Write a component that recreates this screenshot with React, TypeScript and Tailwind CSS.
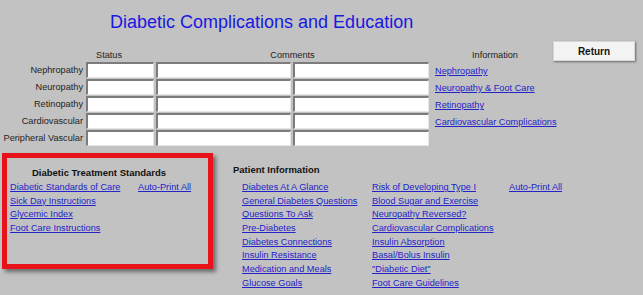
import React from "react";

const font = { fontFamily: '"Liberation Sans", Arial, sans-serif' };

const rows = ["Nephropathy", "Neuropathy", "Retinopathy", "Cardiovascular", "Peripheral Vascular"];
const info = ["Nephropathy", "Neuropathy & Foot Care", "Retinopathy", "Cardiovascular Complications", ""];

const col1 = [
  "Diabetes At A Glance",
  "General Diabetes Questions",
  "Questions To Ask",
  "Pre-Diabetes",
  "Diabetes Connections",
  "Insulin Resistance",
  "Medication and Meals",
  "Glucose Goals",
];
const col2 = [
  "Risk of Developing Type I",
  "Blood Sugar and Exercise",
  "Neuropathy Reversed?",
  "Cardiovascular Complications",
  "Insulin Absorption",
  "Basal/Bolus Insulin",
  "\"Diabetic Diet\"",
  "Foot Care Guidelines",
];

function Field() {
  return (
    <div className="h-[16px] bg-white border-t-2 border-l-2 border-b border-r border-t-[#7c7c7c] border-l-[#7c7c7c] border-b-[#e6e6e6] border-r-[#e6e6e6]" />
  );
}

function Link({ children }: { children: React.ReactNode }) {
  return <a className="text-[#2323c8] underline whitespace-nowrap cursor-pointer">{children}</a>;
}

export default function App() {
  return (
    <div style={font} className="w-[643px] h-[295px] bg-[#c2c2c2] overflow-hidden text-[9.2px] text-[#222]">
      <div className="h-[41px] pt-[12px] pl-[110px]">
        <div className="text-[18px] leading-[20px] text-[#1818e0]">Diabetic Complications and Education</div>
      </div>
      <div className="grid grid-cols-[84px_68px_135px_136px_120px_82px] gap-x-[2px] gap-y-[1px] grid-rows-[20px_repeat(5,16px)]">
        <div />
        <div className="self-end leading-[12px] pl-[10px]">Status</div>
        <div className="col-span-2 self-end leading-[12px] text-center">Comments</div>
        <div className="self-end leading-[12px] pl-[41px]">Information</div>
        <button className="h-[20px] bg-[#f3f3f3] border border-[#d8d8d8] shadow-[1px_1px_2px_rgba(0,0,0,0.45)] text-[10px] font-bold text-[#111]">
          Return
        </button>
        {rows.map((r, i) => (
          <React.Fragment key={r}>
            <div className="text-right pr-[1px] leading-[16px] whitespace-nowrap">{r}</div>
            <Field />
            <Field />
            <Field />
            <div className="pl-[4px] leading-[16px] pt-[1px] col-span-2">{info[i] && <Link>{info[i]}</Link>}</div>
          </React.Fragment>
        ))}
      </div>
      <div className="flex mt-[7px] items-start">
        <div className="ml-[2px] w-[211px] h-[116px] border-[5px] border-[#e8121a] shadow-[3px_3px_4px_rgba(0,0,0,0.45)] pl-[3px] pt-[7px]">
          <div className="pl-[22px] font-bold text-[9.5px] leading-[16px] text-[#111]">Diabetic Treatment Standards</div>
          <div className="grid grid-cols-[128px_auto] leading-[13.67px]">
            <div><Link>Diabetic Standards of Care</Link></div>
            <div><Link>Auto-Print All</Link></div>
            <div><Link>Sick Day Instructions</Link></div>
            <div />
            <div><Link>Glycemic Index</Link></div>
            <div />
            <div><Link>Foot Care Instructions</Link></div>
          </div>
        </div>
        <div className="ml-[20px] pt-[10px]">
          <div className="font-bold text-[9.5px] leading-[14px] text-[#111]">Patient Information</div>
          <div className="mt-[4px] pl-[9px] grid grid-cols-[130px_137px_auto] leading-[13.67px]">
            {col1.map((c, i) => (
              <React.Fragment key={c}>
                <div><Link>{c}</Link></div>
                <div><Link>{col2[i]}</Link></div>
                <div>{i === 0 && <Link>Auto-Print All</Link>}</div>
              </React.Fragment>
            ))}
          </div>
        </div>
      </div>
    </div>
  );
}
